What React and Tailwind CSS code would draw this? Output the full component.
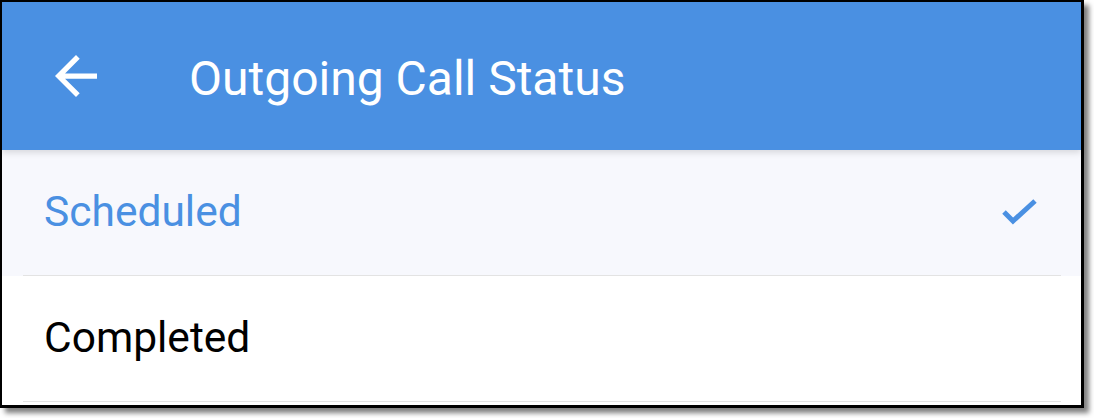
function ArrowBack() {
  return (
    <svg viewBox="4 4 16 16" className="w-[42px] h-[42px] shrink-0" fill="#ffffff">
      <path d="M20 11H7.83l5.59-5.59L12 4l-8 8 8 8 1.41-1.41L7.83 13H20v-2z" />
    </svg>
  );
}

function Check() {
  return (
    <svg viewBox="0 0 36 28" className="w-[36px] h-[28px] shrink-0">
      <polyline points="2,13 11,22 33,2" fill="none" stroke="#4a90e2" strokeWidth="5" />
    </svg>
  );
}

function Row({ label, selected }) {
  return (
    <div className={selected ? 'bg-[#f7f8fd]' : 'bg-white'}>
      <div className="h-[125px] flex items-center justify-between pl-[42px] pr-[43px]">
        <span
          className={`text-[42.5px] leading-none ${selected ? 'text-[#4a90e2]' : 'text-black'}`}
        >
          {label}
        </span>
        {selected && <Check />}
      </div>
      <div className="h-px bg-[#e3e3e3] ml-[21px] mr-[20px]" />
    </div>
  );
}

export default function App() {
  return (
    <div className="w-[1094px] h-[418px] bg-white" style={{ fontFamily: 'Roboto, "Noto Sans", sans-serif' }}>
      <div className="w-[1084px] h-[408px] border-l-2 border-t-2 border-r-[3px] border-b-[3px] border-black bg-white shadow-[5px_5px_5px_rgba(0,0,0,0.5)] flex flex-col">
        <header className="relative z-10 h-[148px] bg-[#4a90e2] flex items-center pl-[53px] shadow-[0_3px_6px_rgba(0,0,0,0.12)]">
          <ArrowBack />
          <h1 className="ml-[92px] pt-[5px] text-[48px] leading-none text-white font-normal">
            Outgoing Call Status
          </h1>
        </header>
        <Row label="Scheduled" selected />
        <Row label="Completed" />
      </div>
    </div>
  );
}
